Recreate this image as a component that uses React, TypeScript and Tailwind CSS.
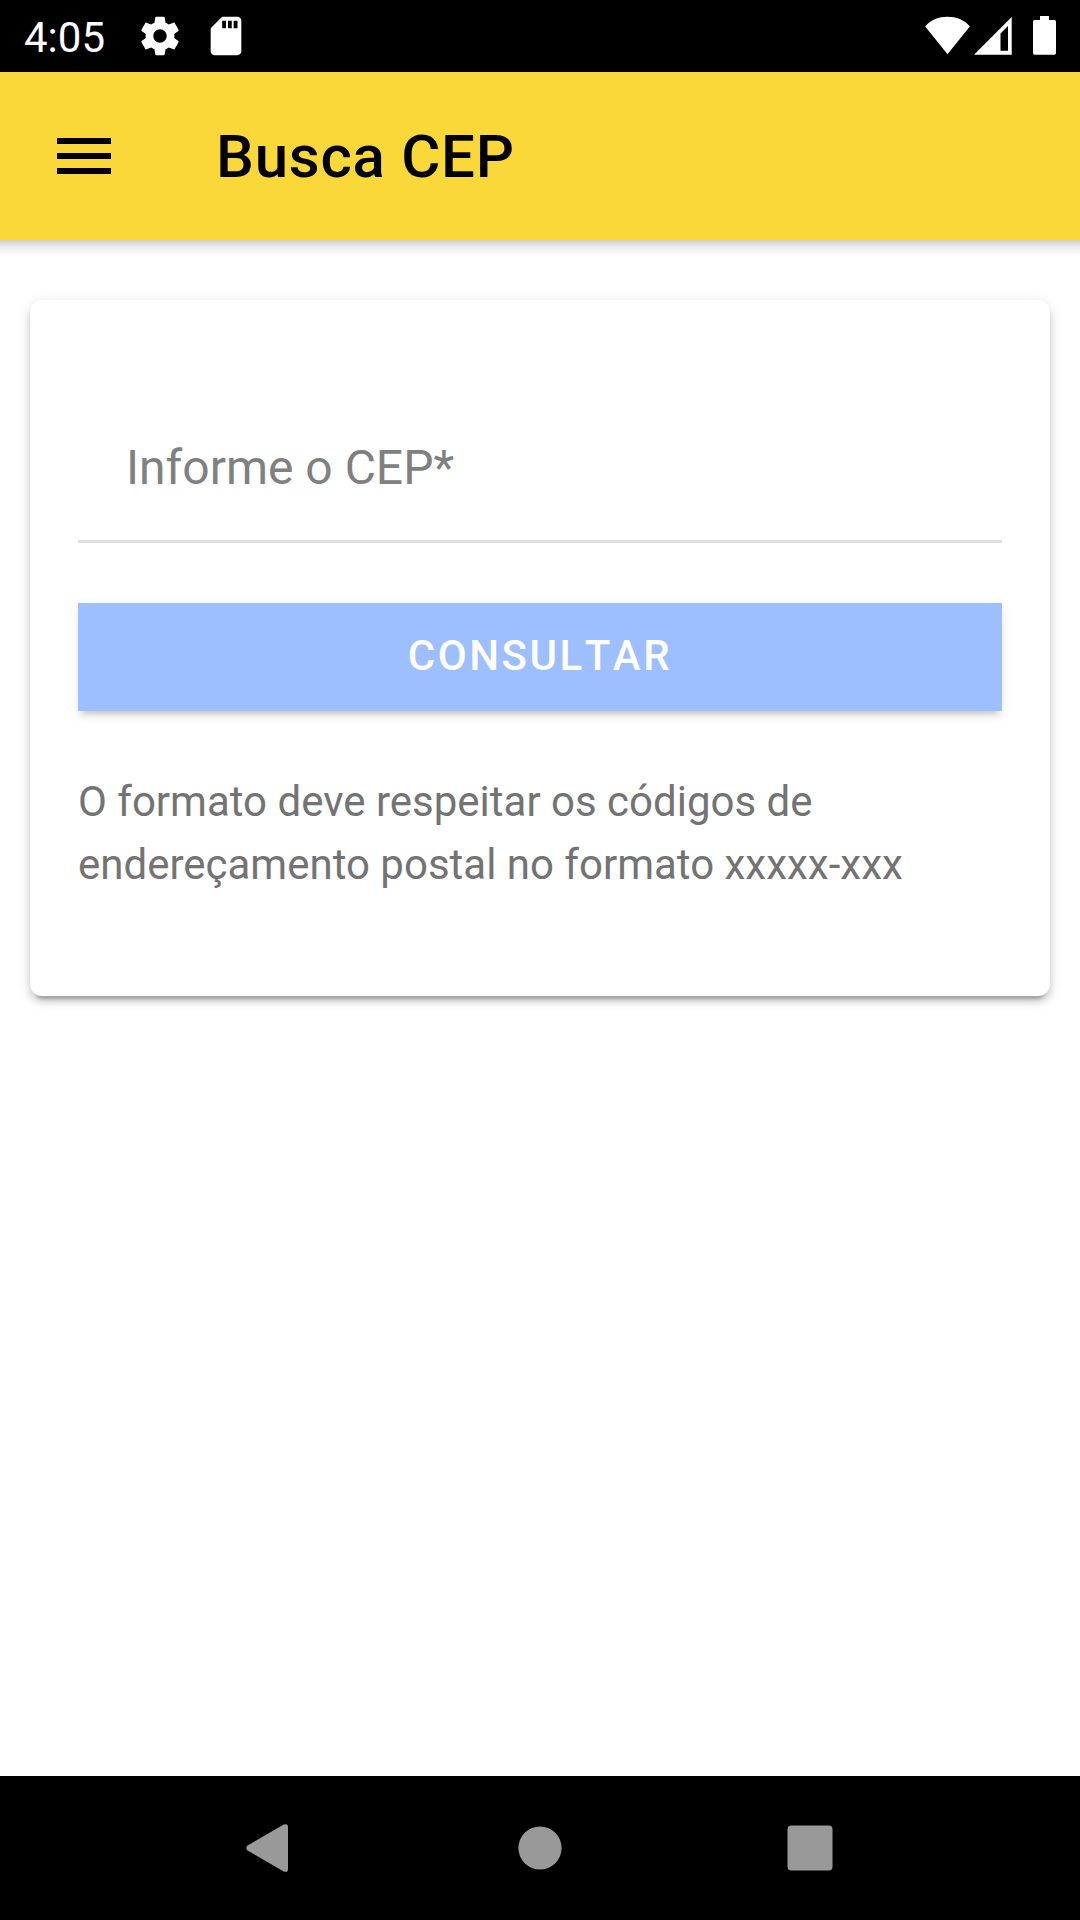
const HINT = "O formato deve respeitar os códigos de endereçamento postal no formato xxxxx-xxx";

function StatusBar() {
  return (
    <div className="flex h-[72px] items-start justify-between bg-black pr-6 pl-6 text-white">
      <div className="flex items-start">
        <span className="mt-[13px] w-[113px] text-[42px] leading-[49px]">4:05</span>
        <svg className="mt-[13px] size-[46px]" viewBox="0 0 24 24" fill="currentColor">
          <path d="M19.43 12.98c.04-.32.07-.64.07-.98s-.03-.66-.07-.98l2.11-1.65c.19-.15.24-.42.12-.64l-2-3.46c-.12-.22-.39-.3-.61-.22l-2.49 1c-.52-.4-1.08-.73-1.69-.98l-.38-2.65C14.46 2.18 14.25 2 14 2h-4c-.25 0-.46.18-.49.42l-.38 2.65c-.61.25-1.17.59-1.69.98l-2.49-1c-.23-.09-.49 0-.61.22l-2 3.46c-.13.22-.07.49.12.64l2.11 1.65c-.04.32-.07.65-.07.98s.03.66.07.98l-2.11 1.65c-.19.15-.24.42-.12.64l2 3.46c.12.22.39.3.61.22l2.49-1c.52.4 1.08.73 1.69.98l.38 2.65c.03.24.24.42.49.42h4c.25 0 .46-.18.49-.42l.38-2.65c.61-.25 1.17-.59 1.69-.98l2.49 1c.23.09.49 0 .61-.22l2-3.46c.12-.22.07-.49-.12-.64l-2.11-1.65zM12 15.5c-1.93 0-3.5-1.57-3.5-3.5s1.57-3.5 3.5-3.5 3.5 1.57 3.5 3.5-1.57 3.5-3.5 3.5z" />
        </svg>
        <svg className="mt-[13px] ml-5 size-[46px]" viewBox="0 0 24 24" fill="currentColor">
          <path d="M18 2h-8L4.02 8 4 20c0 1.100.9 2 2 2h12c1.100 0 2-.9 2-2V4c0-1.100-.9-2-2-2zm-6 6h-2V4h2v4zm3 0h-2V4h2v4zm3 0h-2V4h2v4z" />
        </svg>
      </div>
      <div className="flex items-start pt-4">
        <svg className="h-[39px] w-[46px]" viewBox="0 0 46 39" fill="currentColor">
          <path d="M.2 10.500C6 3.800 13.500 .8 22.500 .8s16.500 3 22.300 9.700L22.500 38.200z" />
        </svg>
        <svg className="ml-[2.5px] h-[39px] w-[38px]" viewBox="0 0 38 39" fill="currentColor" fillRule="evenodd">
          <path d="M0 38.700L37.700 1v37.700zM26.500 17.500v17.200h7.500V10z" />
        </svg>
        <svg className="ml-[21.5px] h-[39px] w-[23px]" viewBox="0 0 23 39" fill="currentColor">
          <path d="M7 0h9v4h5.500a1.500 1.500 0 0 1 1.500 1.500v31.500a1.700 1.700 0 0 1-1.700 1.700H1.700A1.700 1.700 0 0 1 0 37V5.500A1.500 1.500 0 0 1 1.500 4H7z" />
        </svg>
      </div>
    </div>
  );
}

function Toolbar() {
  return (
    <header>
      <div className="flex h-[168px] items-center bg-[#fad839] text-black">
        <button type="button" aria-label="Menu" className="ml-[57px] flex w-[54px] flex-col gap-[9px]">
          <span className="h-[6px] bg-black" />
          <span className="h-[6px] bg-black" />
          <span className="h-[6px] bg-black" />
        </button>
        <h1 className="ml-[105px] pt-[2px] text-[60px] leading-[72px] font-medium tracking-[0.0125em]">Busca CEP</h1>
      </div>
      <div className="h-[15px] bg-linear-to-b from-[#cdcdcd] via-[#ebebeb] via-45% to-white" />
    </header>
  );
}

function SearchCard() {
  return (
    <main className="mx-[30px] mt-[45px] h-[696px] rounded-[12px] bg-white px-12 pt-[120px] shadow-[0_9px_3px_-6px_rgba(0,0,0,0.2),0_6px_6px_0_rgba(0,0,0,0.14),0_3px_15px_0_rgba(0,0,0,0.12)]">
      <div className="h-[123px] border-b-[3px] border-[#dedede] pt-[19px] pl-12">
        <input
          type="text"
          placeholder="Informe o CEP*"
          className="block h-[57px] w-full text-[48px] leading-[57px] outline-none placeholder:text-[#808080]"
        />
      </div>
      <button
        type="button"
        className="mt-[60px] block h-[108px] w-full bg-[#9dbeff] pb-[2px] text-[42px] leading-[42px] font-medium tracking-[0.06em] text-white shadow-[0_9px_3px_-6px_rgba(0,0,0,0.1),0_6px_6px_0_rgba(0,0,0,0.07),0_3px_15px_0_rgba(0,0,0,0.06)] [font-kerning:none]"
      >
        CONSULTAR
      </button>
      <p className="mt-[59px] text-[42px] leading-[63px] text-[#737373]">{HINT}</p>
    </main>
  );
}

function NavigationBar() {
  return (
    <nav className="mt-auto flex h-36 items-center justify-center gap-[222px] bg-black text-[#999999]">
      <svg className="size-12" viewBox="0 0 48 48" fill="currentColor">
        <path d="M1.500 21.600L37.800.6Q42 -1 42 3v42q0 4-4.200 2.400L1.500 26.400Q-1 24 1.500 21.600z" />
      </svg>
      <svg className="size-12" viewBox="0 0 48 48" fill="currentColor">
        <circle cx="24" cy="24" r="21.600" />
      </svg>
      <svg className="size-12" viewBox="0 0 48 48" fill="currentColor">
        <rect x="1.500" y="1.500" width="45" height="45" rx="4" />
      </svg>
    </nav>
  );
}

export default function App() {
  return (
    <div className="flex h-[1920px] w-[1080px] flex-col overflow-hidden bg-white font-[Roboto,sans-serif]">
      <StatusBar />
      <Toolbar />
      <SearchCard />
      <NavigationBar />
    </div>
  );
}
